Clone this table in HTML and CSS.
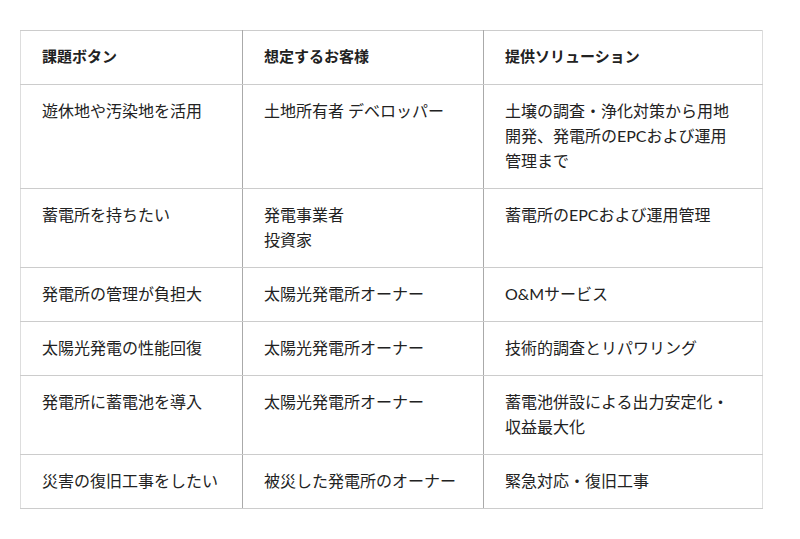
FILE: index.html
```html
<!DOCTYPE html>
<html lang="ja">
<head>
<meta charset="utf-8">
<link rel="stylesheet" href="styles.css">
</head>
<body>
<div class="page">
<table class="solutions">
  <colgroup>
    <col class="c1"><col class="c2"><col class="c3">
  </colgroup>
  <thead>
    <tr><th>課題ボタン</th><th>想定するお客様</th><th>提供ソリューション</th></tr>
  </thead>
  <tbody>
    <tr><td>遊休地や汚染地を活用</td><td>土地所有者 デベロッパー</td><td>土壌の調査・浄化対策から用地開発、発電所のEPCおよび運用管理まで</td></tr>
    <tr><td>蓄電所を持ちたい</td><td>発電事業者<br>投資家</td><td>蓄電所のEPCおよび運用管理</td></tr>
    <tr><td>発電所の管理が負担大</td><td>太陽光発電所オーナー</td><td>O&amp;Mサービス</td></tr>
    <tr><td>太陽光発電の性能回復</td><td>太陽光発電所オーナー</td><td>技術的調査とリパワリング</td></tr>
    <tr><td>発電所に蓄電池を導入</td><td>太陽光発電所オーナー</td><td>蓄電池併設による出力安定化・収益最大化</td></tr>
    <tr><td>災害の復旧工事をしたい</td><td>被災した発電所のオーナー</td><td>緊急対応・復旧工事</td></tr>
  </tbody>
</table>
</div>
</body>
</html>
```

FILE: styles.css
```css
html, body {
  margin: 0;
  padding: 0;
  background: #fff;
}
.page {
  padding: 30px 38px 30px 20px;
}
.solutions {
  width: 742px;
  border-collapse: collapse;
  table-layout: fixed;
  font-family: Lato, "Noto Sans CJK JP", sans-serif;
  font-size: 16px;
  line-height: 25px;
  color: #222;
}
.c1 { width: 222px; }
.c2 { width: 241px; }
.c3 { width: 279px; }
.solutions th,
.solutions td {
  border-top: 1px solid #ccc;
  border-bottom: 1px solid #ccc;
  border-left: 1px solid #aaa;
  border-right: 1px solid #aaa;
  padding: 13px 21px 15px 21px;
  text-align: left;
  vertical-align: top;
}
.solutions th:first-child,
.solutions td:first-child {
  border-left-color: #ddd;
}
.solutions th:last-child,
.solutions td:last-child {
  border-right-color: #ddd;
}
.solutions th {
  font-weight: 700;
  font-size: 15px;
}
```
